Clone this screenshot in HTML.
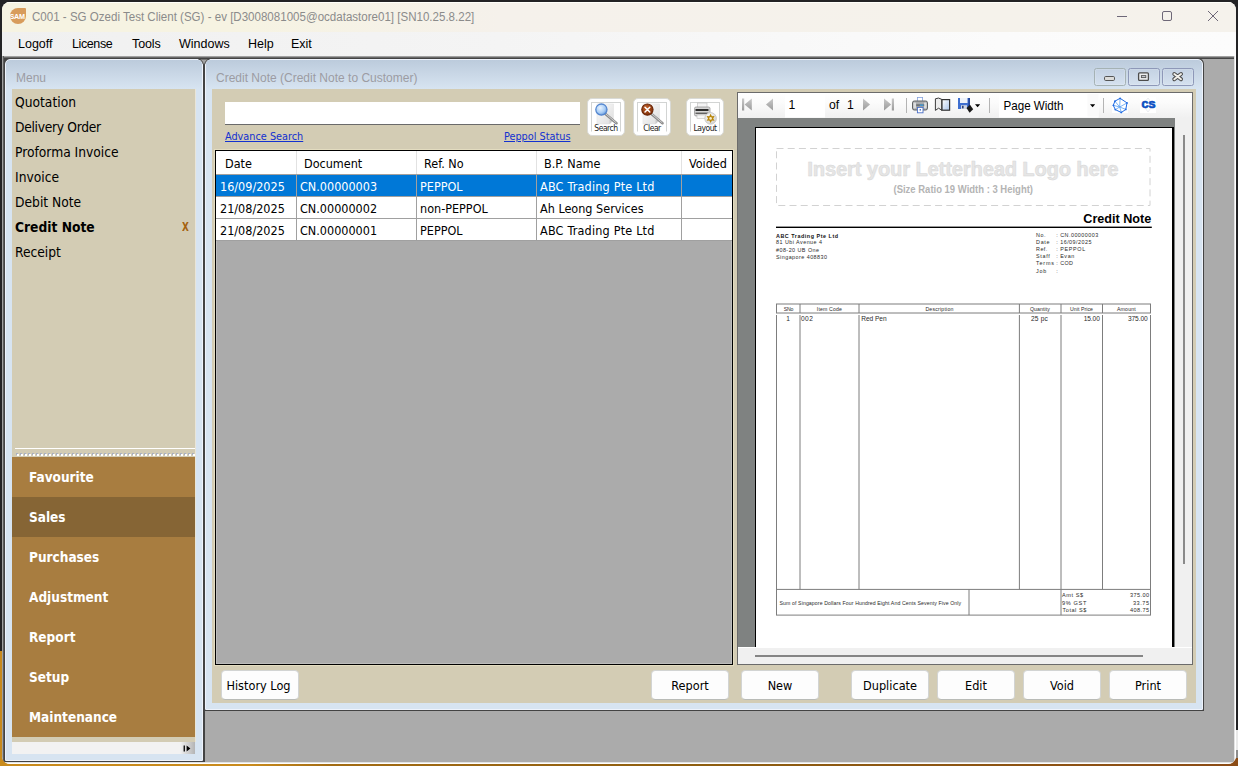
<!DOCTYPE html>
<html lang="en">
<head>
<meta charset="utf-8">
<title>C001 - SG Ozedi Test Client (SG)</title>
<style>
*{box-sizing:border-box;margin:0;padding:0}
html,body{width:1238px;height:766px;overflow:hidden}
body{position:relative;background:#232325;font-family:"Liberation Sans","DejaVu Sans",sans-serif;font-size:12px;color:#000}
.abs,div,span,svg,i{position:absolute}
.t{white-space:nowrap;line-height:1}
.tah{font-family:"DejaVu Sans Condensed","DejaVu Sans","Liberation Sans",sans-serif}
/* desktop behind window */
#deskL{left:0;top:651px;width:8px;height:115px;background:#c88a1e}
#deskB{left:0;top:754px;width:1238px;height:12px;background:linear-gradient(90deg,#c98b1d 0,#c98b1d 250px,#a36c14 330px,#8e5e10 700px,#8c4c16 1238px)}
#deskR1{left:1228px;top:730px;width:10px;height:20px;background:#e9e9e9}
#deskR2{left:1228px;top:750px;width:10px;height:8px;background:#8d8d8d}
/* main window */
#win{left:0;top:0;width:1238px;height:766px;clip-path:inset(2px 2px 2px 2px round 8px);background:#fff}
#titlebar{left:0;top:0;width:1238px;height:32px;background:linear-gradient(90deg,#f6f3e2 0,#f6f3e2 230px,#f5f1eb 500px,#f5f2eb 1000px,#f5f2ec 1238px)}
#menubar{left:0;top:32px;width:1238px;height:24px;background:linear-gradient(90deg,#f0f0f0 0,#f1f1f1 120px,#f4f4f4 500px,#fbfbfb 1000px,#fcfcfc 1238px)}
#mdi{left:2px;top:56px;width:1232px;height:706px;background:linear-gradient(180deg,#a0a0a0 0,#a0a0a0 1px,#696969 1px,#696969 2px,#444 2px,#444 3px,#ababab 3px)}
#mdiedge{left:1234px;top:56px;width:2px;height:708px;background:linear-gradient(90deg,#e3e3e3 0,#e3e3e3 1px,#fff 1px)}
#mdiedgeb{left:2px;top:762px;width:1234px;height:2px;background:linear-gradient(180deg,#e3e3e3 0,#e3e3e3 1px,#fff 1px)}

.mi{top:38px;font-size:12.5px;color:#000}

.li{left:15px;font-size:13.7px;color:#000}
.nb{left:29px;font-size:13.5px;font-weight:bold;color:#fff}

.cb{top:68px;width:32px;height:18px;border:1px solid #8e98b8;border-radius:2.5px;background:linear-gradient(180deg,#c4d2e3 0,#d5e1ef 100%);box-shadow:inset 0 0 0 1px rgba(255,255,255,.15)}
.lk{top:131.5px;font-size:10.8px;color:#1231d0;text-decoration:underline;text-decoration-thickness:1px;text-underline-offset:0.8px}
.ib{top:98px;width:38px;height:38px;background:#fff;border-radius:5px;border:1px solid #d9dad6}
.ib i{left:3px;top:3px;width:30px;height:30px;border:1px solid #d2d4d3;border-bottom-color:#fff}
.ib span{left:0;width:36px;text-align:center;top:25px;font-size:8.5px;letter-spacing:-0.5px;color:#222}
.hl{left:216px;width:516px;height:1px;background:#a0a0a0}
.vl{top:175px;width:1px;height:66px;background:#a0a0a0}
.vh{top:151px;width:1px;height:23px;background:#e2e2e2}
.gh{top:158px;font-size:12.5px}
.gc{font-size:12.5px}
.r1{top:181px;color:#fff}.r2{top:203px}.r3{top:225px}
.bt{top:670px;width:78px;height:30px;background:#fdfdfd;border-radius:4.5px;border:1px solid #d2d4d3;border-bottom-color:#b9bbb7;font-size:12.6px;line-height:29px;text-align:center;white-space:nowrap}
</style>
</head>
<body>
<div id="deskL"></div>
<div id="deskB"></div>
<div id="deskR1"></div>
<div id="deskR2"></div>
<div id="win">
 <div id="titlebar"></div>
 <div id="menubar"></div>
 <div style="left:0;top:2px;width:1238px;height:1px;background:#fffffa"></div>
 <div id="mdi"></div>
 <div id="mdiedge"></div>
 <div id="mdiedgeb"></div>
 
 <!-- left menu panel -->
 <div id="lp" style="left:2px;top:56px;width:203px;height:706px;background:linear-gradient(180deg,#a0a0a0 0,#a0a0a0 1px,#696969 1px,#696969 2px,#434343 2px);border-left:1px solid #a0a0a0;box-shadow:inset 1px 0 0 #5c5c5c"></div>
 <div id="lpi" style="left:5px;top:59px;width:198px;height:702px;background:linear-gradient(180deg,#bccbdc 0,#d7e4f1 29px,#d7e4f1 100%);border:1px solid #eef3fc;border-radius:5px 5px 0 0"></div>
 <span class="t" style="left:16px;top:72px;font-size:12px;color:#9c9ca3">Menu</span>
 <div id="lpb" style="left:12px;top:89px;width:184px;height:653px;background:#d3ccb4;border-right:1px solid #e9e5d8"></div>
 <span class="t tah li" style="top:96px">Quotation</span>
 <span class="t tah li" style="top:121px;letter-spacing:-0.3px">Delivery Order</span>
 <span class="t tah li" style="top:146px">Proforma Invoice</span>
 <span class="t tah li" style="top:171px">Invoice</span>
 <span class="t tah li" style="top:196px">Debit Note</span>
 <span class="t tah li" style="top:221px;font-weight:bold">Credit Note</span>
 <span class="t tah" style="left:182px;top:221px;font-size:12.3px;font-weight:bold;color:#a4610e;transform:scaleX(.8);transform-origin:0 0">X</span>
 <span class="t tah li" style="top:246px">Receipt</span>
 <div style="left:15px;top:448px;width:180px;height:1px;background:#fff"></div>
 <div style="left:16px;top:453px;width:178px;height:2px;background:repeating-linear-gradient(90deg,#a9b0c0 0,#a9b0c0 2px,transparent 2px,transparent 4px)"></div><div style="left:17px;top:454px;width:178px;height:2px;background:repeating-linear-gradient(90deg,#fff 0,#fff 2px,transparent 2px,transparent 4px)"></div>
 <div id="nav" style="left:12px;top:457px;width:183px;height:280px;background:#a87d40"></div>
 <div style="left:12px;top:497px;width:183px;height:40px;background:#866535"></div>
 <span class="t tah nb" style="top:471px">Favourite</span>
 <span class="t tah nb" style="top:511px">Sales</span>
 <span class="t tah nb" style="top:551px">Purchases</span>
 <span class="t tah nb" style="top:591px">Adjustment</span>
 <span class="t tah nb" style="top:631px">Report</span>
 <span class="t tah nb" style="top:671px">Setup</span>
 <span class="t tah nb" style="top:711px">Maintenance</span>
 <div style="left:12px;top:742px;width:183px;height:12px;background:#f2f2f2"></div>
 <div style="left:180px;top:742px;width:15px;height:12px;background:linear-gradient(90deg,#f2f2f2,#b4b4b4)"></div>
 <svg style="left:183px;top:745px" width="9" height="7" viewBox="0 0 9 7"><rect x="0.6" y="0.5" width="1.3" height="6" fill="#000"/><path d="M3.6 0.5 L7.4 3.5 L3.6 6.5Z" fill="#000"/></svg>
 <!--LEFTPANEL-->
 
 <!-- credit note window frame -->
 <div id="cw" style="left:204px;top:58px;width:1000px;height:653px;background:#434343;border-radius:0 6px 0 0"></div>
 <div id="cwi" style="left:205px;top:59px;width:998px;height:651px;background:linear-gradient(180deg,#bccbdc 0,#d7e4f1 29px,#d7e4f1 100%);border:1px solid #eef3fc;border-radius:5px 5px 0 0"></div>
 <span class="t" style="left:216px;top:72px;font-size:12px;color:#9c9ca3">Credit Note (Credit Note to Customer)</span>
 <!-- mdi child buttons -->
 <div class="cb" style="left:1094px;border-color:#a5b2b4"></div>
 <div class="cb" style="left:1128px"></div>
 <div class="cb" style="left:1162px"></div>
 <svg style="left:1094px;top:68px" width="100" height="18" viewBox="0 0 100 18">
  <rect x="10.5" y="8.5" width="10" height="4" rx="1.2" fill="#dcdcda" stroke="#555" stroke-width="1"/>
  <rect x="44.6" y="4.8" width="9.8" height="7.6" rx="1" fill="#eceef0" stroke="#4c4c4c" stroke-width="1.3"/>
  <rect x="47.4" y="7.6" width="4.4" height="2" fill="#c9ced6" stroke="#555" stroke-width="0.9"/>
  <path d="M80.3 6 L87 11.2 M87 6 L80.3 11.2" stroke="#4c4c4c" stroke-width="4" stroke-linecap="round"/>
  <path d="M80.3 6 L87 11.2 M87 6 L80.3 11.2" stroke="#f1f0ea" stroke-width="2" stroke-linecap="round"/>
 </svg>
 <div id="cbody" style="left:212px;top:89px;width:984px;height:614px;background:#d3ccb4"></div>
 <!-- search row -->
 <div style="left:225px;top:102px;width:355px;height:23px;background:#fff;border-bottom:1px solid #6a6a6a"></div>
 <span class="t tah lk" style="left:225px">Advance Search</span>
 <span class="t tah lk" style="left:504px">Peppol Status</span>
 <div class="ib" style="left:587px"><i></i><span class="t tah">Search</span></div>
 <div class="ib" style="left:633px"><i></i><span class="t tah">Clear</span></div>
 <div class="ib" style="left:686px"><i></i><span class="t tah">Layout</span></div>
 
 <svg style="left:588px;top:99px" width="136" height="36" viewBox="588 99 136 36">
  <defs>
   <linearGradient id="pap" x1="0" y1="0" x2="1" y2="1"><stop offset="0" stop-color="#fdfdfd"/><stop offset="1" stop-color="#dcdcdc"/></linearGradient>
   <radialGradient id="lensb" cx="0.4" cy="0.35" r="0.7"><stop offset="0" stop-color="#eaf4ff"/><stop offset="0.6" stop-color="#a9cdf5"/><stop offset="1" stop-color="#5e92d8"/></radialGradient>
   <radialGradient id="lensr" cx="0.4" cy="0.35" r="0.7"><stop offset="0" stop-color="#c4622a"/><stop offset="1" stop-color="#7a2c06"/></radialGradient>
   <radialGradient id="gear" cx="0.4" cy="0.35" r="0.7"><stop offset="0" stop-color="#ffffff"/><stop offset="1" stop-color="#cfcfcf"/></radialGradient>
  </defs>
  <!-- search -->
  <path d="M597 104 L613.5 104 L613.5 120 L609.5 124 L597 124Z" fill="url(#pap)" stroke="#e3e3e3" stroke-width="0.6"/>
  <path d="M613.5 120 L609.5 120 L609.5 124Z" fill="#c9c9c9"/>
  <path d="M605.5 114 L616.5 123.2" stroke="#8a8a8a" stroke-width="2.6" stroke-linecap="round"/>
  <path d="M605.5 113.6 L616 122.6" stroke="#d9d9d9" stroke-width="0.9" stroke-linecap="round"/>
  <circle cx="601.4" cy="109.6" r="5.6" fill="url(#lensb)" stroke="#5486cf" stroke-width="1.3"/>
  <!-- clear -->
  <path d="M643 104 L659.5 104 L659.5 120 L655.5 124 L643 124Z" fill="url(#pap)" stroke="#e3e3e3" stroke-width="0.6"/>
  <path d="M659.5 120 L655.5 120 L655.5 124Z" fill="#c9c9c9"/>
  <path d="M651.5 114 L662.5 123.2" stroke="#8a8a8a" stroke-width="2.6" stroke-linecap="round"/>
  <path d="M651.5 113.6 L662 122.6" stroke="#d9d9d9" stroke-width="0.9" stroke-linecap="round"/>
  <circle cx="647.4" cy="109.6" r="5.6" fill="url(#lensr)" stroke="#6b2606" stroke-width="1.2"/>
  <path d="M645 107.2 L649.8 112 M649.8 107.2 L645 112" stroke="#fff" stroke-width="1.5" stroke-linecap="round"/>
  <!-- layout -->
  <rect x="697.5" y="103" width="9.5" height="5" fill="#f4f4f4" stroke="#bdbdbd" stroke-width="0.6"/>
  <rect x="694.5" y="107" width="15.5" height="9" rx="1.5" fill="#d6d6d6" stroke="#8c8c8c" stroke-width="0.7"/>
  <rect x="695.5" y="109" width="13" height="2" fill="#2b2b2b"/>
  <rect x="695.5" y="112.6" width="13" height="1.3" fill="#555"/>
  <rect x="697" y="115" width="10" height="3.5" fill="#f7f7f7" stroke="#b5b5b5" stroke-width="0.5"/>
  <circle cx="710.6" cy="118.4" r="5.8" fill="url(#gear)" stroke="#c4c4c4" stroke-width="0.8"/>
  <path d="M710.6 113.8 L711.9 116.2 L714.6 116.1 L713.2 118.4 L714.6 120.7 L711.9 120.6 L710.6 123 L709.3 120.6 L706.6 120.7 L708 118.4 L706.6 116.1 L709.3 116.2Z" fill="#b8860b"/>
  <circle cx="710.6" cy="118.4" r="1.3" fill="#f6ecc8"/>
 </svg>

 <!-- grid -->
 <div id="grid" style="left:214px;top:149px;width:520px;height:517px;background:#e3dcc0"></div><div style="left:215px;top:150px;width:518px;height:515px;background:#ababab;border:1px solid #000;box-shadow:inset 0 0 0 1px #bdbdbd"></div>
 <div style="left:216px;top:151px;width:516px;height:24px;background:#fff;border-bottom:1px solid #a4a09c"></div>
 <div style="left:216px;top:175px;width:516px;height:21px;background:#0078d7"></div>
 <div style="left:216px;top:196px;width:516px;height:45px;background:#fff"></div>
 <div class="hl" style="top:196px"></div><div class="hl" style="top:218px"></div><div class="hl" style="top:240px"></div>
 <div class="vl" style="left:296px"></div><div class="vl" style="left:416px"></div><div class="vl" style="left:536px"></div><div class="vl" style="left:681px"></div>
 <div class="vh" style="left:296px"></div><div class="vh" style="left:416px"></div><div class="vh" style="left:536px"></div><div class="vh" style="left:681px"></div>
 <span class="t tah gh" style="left:225px">Date</span>
 <span class="t tah gh" style="left:304px">Document</span>
 <span class="t tah gh" style="left:424px">Ref. No</span>
 <span class="t tah gh" style="left:544px">B.P. Name</span>
 <span class="t tah gh" style="left:689px">Voided</span>
 <span class="t tah gc r1" style="left:220px">16/09/2025</span><span class="t tah gc r1" style="left:300px">CN.00000003</span><span class="t tah gc r1" style="left:420px">PEPPOL</span><span class="t tah gc r1" style="left:540px;letter-spacing:0.2px">ABC Trading Pte Ltd</span>
 <span class="t tah gc r2" style="left:220px">21/08/2025</span><span class="t tah gc r2" style="left:300px">CN.00000002</span><span class="t tah gc r2" style="left:420px">non-PEPPOL</span><span class="t tah gc r2" style="left:540px">Ah Leong Services</span>
 <span class="t tah gc r3" style="left:220px">21/08/2025</span><span class="t tah gc r3" style="left:300px">CN.00000001</span><span class="t tah gc r3" style="left:420px">PEPPOL</span><span class="t tah gc r3" style="left:540px;letter-spacing:0.2px">ABC Trading Pte Ltd</span>
 <!-- bottom buttons -->
 <div class="bt tah" style="left:221px;padding-right:3px">History Log</div>
 <div class="bt tah" style="left:651px">Report</div>
 <div class="bt tah" style="left:741px">New</div>
 <div class="bt tah" style="left:851px">Duplicate</div>
 <div class="bt tah" style="left:937px">Edit</div>
 <div class="bt tah" style="left:1023px">Void</div>
 <div class="bt tah" style="left:1109px">Print</div>
 
 <!-- report viewer -->
 <div id="rv" style="left:737px;top:92px;width:456px;height:573px;background:#f0f0f0;border:1px solid #6b6b6b"></div>
 <div id="rvtb" style="left:738px;top:93px;width:454px;height:25px;background:linear-gradient(180deg,#ffffff 0,#fbfbfb 40%,#f0f0f0 100%)"></div>
 <div id="rvbg" style="left:738px;top:118px;width:437px;height:529px;background:#7f8281"></div>
 <div id="page" style="left:755px;top:127px;width:419px;height:520px;background:#fff;border-left:1px solid #000;border-top:1px solid #000;border-right:2px solid #000"></div>
 <div style="left:738px;top:647px;width:454px;height:1px;background:#fff"></div>
 <div style="left:1183px;top:135px;width:2px;height:429px;background:#8a8a8a"></div>
 <div style="left:755px;top:655px;width:388px;height:2px;background:#858585"></div>
 <!-- toolbar -->
 <svg id="tbsvg" style="left:738px;top:93px" width="454" height="25" viewBox="738 93 454 25" font-family="'Liberation Sans',sans-serif">
  <defs>
   <linearGradient id="gg" x1="0" y1="0" x2="0" y2="1"><stop offset="0" stop-color="#c9c9c9"/><stop offset="1" stop-color="#9b9b9b"/></linearGradient>
   <linearGradient id="pg" x1="0" y1="0" x2="1" y2="1"><stop offset="0" stop-color="#ffffff"/><stop offset="1" stop-color="#a9c4ea"/></linearGradient>
  </defs>
  <g fill="url(#gg)">
   <rect x="742" y="98.5" width="2.2" height="12"/><path d="M751.8 98.5 L751.8 110.5 L744.6 104.5Z"/>
   <path d="M773 98.5 L773 110.5 L766 104.5Z"/>
   <path d="M863 98.5 L863 110.5 L870 104.5Z"/>
   <path d="M884 98.5 L884 110.5 L891.2 104.5Z"/><rect x="891.8" y="98.5" width="2.2" height="12"/>
  </g>
  <rect x="785" y="93" width="40" height="24.5" fill="#fff"/>
  <text x="788.5" y="108.6" font-size="12.2" fill="#000">1</text>
  <text x="829" y="108.6" font-size="12.2" fill="#000">of</text>
  <text x="847" y="108.6" font-size="12.2" fill="#000">1</text>
  <rect x="906" y="98" width="1" height="15" fill="#b4b4b4"/>
  <rect x="989" y="98" width="1" height="15" fill="#b4b4b4"/>
  <rect x="1103" y="98" width="1" height="15" fill="#b4b4b4"/>
  <!-- printer -->
  <g>
   <rect x="917.4" y="97.4" width="5.2" height="4.2" fill="#fff" stroke="#86a2dc" stroke-width="0.8"/>
   <rect x="912.5" y="101" width="15" height="9" rx="1.8" fill="#a9abad" stroke="#5f6163" stroke-width="1"/>
   <rect x="913.4" y="102.6" width="2.6" height="5.8" rx="0.8" fill="#dcdddd"/>
   <rect x="924" y="102.6" width="2.6" height="5.8" rx="0.8" fill="#dcdddd"/>
   <rect x="916.2" y="104.2" width="8" height="2" fill="#6f7276"/>
   <rect x="919.8" y="104.5" width="3.6" height="1.2" fill="#3aa6ee"/>
   <rect x="917.4" y="107.4" width="5.6" height="5.4" fill="#fff" stroke="#4a6fc8" stroke-width="0.9"/>
   <rect x="919.6" y="109.2" width="1.4" height="1.3" fill="#2c58c0"/>
  </g>
  <!-- book -->
  <g>
   <path d="M935.4 98.8 Q938.5 97 941.8 99.4 L941.8 110.3 L938.6 108.2 L935.4 110.4Z" fill="#ececec" stroke="#3b3b3b" stroke-width="1"/>
   <rect x="942" y="99.6" width="7.6" height="10.6" fill="url(#pg)" stroke="#333" stroke-width="1.2"/>
  </g>
  <!-- save -->
  <g>
   <rect x="958" y="98" width="12" height="11" fill="#3e6fd0"/>
   <rect x="960" y="98" width="7.5" height="5" fill="#eef3fb"/>
   <rect x="961" y="105.2" width="6" height="3.8" fill="#cfd6e4"/>
   <rect x="962" y="105.8" width="1.6" height="2.6" fill="#2a3f78"/>
   <rect x="968.3" y="98" width="1.7" height="9" fill="#24479c"/>
   <path d="M966.5 108 L970 104.8 L973.2 109.2 L969.6 112.8Z" fill="#1a1a1a"/>
   <path d="M975 104.2 L980.2 104.2 L977.6 107.2Z" fill="#000"/>
  </g>
  <!-- combo -->
  <rect x="999" y="93" width="99.5" height="24.5" fill="#fff"/>
  <rect x="1087.5" y="94" width="11" height="22.5" fill="#fafafa"/>
  <text x="1003.5" y="109.9" font-size="12.2" fill="#000" textLength="60" lengthAdjust="spacingAndGlyphs">Page Width</text>
  <path d="M1090 104.2 L1095.2 104.2 L1092.6 107.2Z" fill="#000"/>
  <!-- poly icon -->
  <rect x="1112" y="97" width="16" height="16" fill="#fff"/>
  <g fill="none" stroke="#1f6ae2" stroke-width="1" stroke-linejoin="round">
   <path d="M1120.1 98.3 L1127 102.9 L1125.8 109.4 L1121.3 112.5 L1115.3 109.6 L1113.3 105.3 L1114.9 101.2Z"/>
   <path d="M1120.1 98.3 L1119.7 107 L1127 102.9 M1119.7 107 L1113.3 105.3 M1119.7 107 L1121.3 112.5 M1114.9 101.2 L1119.7 107 L1125.8 109.4 M1115.3 109.6 L1119.7 107" stroke="#57a0f4" stroke-width="0.8"/>
  </g>
  <g fill="#1f6ae2"><circle cx="1120.1" cy="98.4" r="0.9"/><circle cx="1127" cy="102.9" r="0.9"/><circle cx="1125.8" cy="109.4" r="0.9"/><circle cx="1121.3" cy="112.4" r="0.9"/><circle cx="1115.3" cy="109.6" r="0.9"/><circle cx="1113.4" cy="105.3" r="0.9"/><circle cx="1114.9" cy="101.2" r="0.9"/></g>
  <!-- CS icon -->
  <rect x="1140" y="97" width="16" height="16" fill="#fff"/>
  <path d="M1148 98 L1153 105 L1148 112 L1143 105Z" fill="none" stroke="#e6e9ee" stroke-width="0.8"/>
  <text x="1141.4" y="108.2" font-size="10.4" font-weight="bold" fill="#0b4ec2" stroke="#0b4ec2" stroke-width="0.6" textLength="14" lengthAdjust="spacingAndGlyphs" font-family="'Liberation Mono','DejaVu Sans Mono',monospace">CS</text>
 </svg>
  <svg id="pagesvg" style="left:756px;top:128px" width="416" height="519" viewBox="756 128 416 519" font-family="'Liberation Sans',sans-serif">
  <rect x="776.5" y="148.5" width="373.5" height="57" fill="none" stroke="#d2d2d2" stroke-width="1" stroke-dasharray="7 4.2"/>
  <text x="808.1" y="176.3" font-size="21" font-weight="bold" fill="#f1f1f1" textLength="311" lengthAdjust="spacingAndGlyphs">Insert your Letterhead Logo here</text>
  <text x="807.3" y="175.6" font-size="21" font-weight="bold" fill="#e6e6e6" stroke="#d6d6d6" stroke-width="0.45" textLength="311" lengthAdjust="spacingAndGlyphs">Insert your Letterhead Logo here</text>
  <text x="893.5" y="193.3" font-size="10.4" font-weight="bold" fill="#b4b4b4" textLength="139.5" lengthAdjust="spacingAndGlyphs">(Size Ratio 19 Width : 3 Height)</text>
  <text x="1151.3" y="222.9" font-size="13" font-weight="bold" fill="#000" text-anchor="end" textLength="68" lengthAdjust="spacingAndGlyphs">Credit Note</text>
  <rect x="776" y="226.6" width="375.8" height="1.4" fill="#000"/>
  <text x="776" y="237.9" font-size="5.4" font-weight="bold" textLength="62" lengthAdjust="spacing" fill="#111">ABC Trading Pte Ltd</text>
  <text x="776" y="243.9" font-size="5.4" textLength="46" lengthAdjust="spacing" fill="#2a2a2a">81 Ubi Avenue 4</text>
  <text x="776" y="251.8" font-size="5.4" textLength="43" lengthAdjust="spacing" fill="#2a2a2a">#08-20 UB One</text>
  <text x="776" y="258.8" font-size="5.4" textLength="51" lengthAdjust="spacing" fill="#2a2a2a">Singapore 408830</text>
  <text x="1036.1" y="236.8" font-size="5.4" textLength="9.4" lengthAdjust="spacing" fill="#2a2a2a">No.</text>
  <text x="1056.2" y="236.8" font-size="5.4" fill="#2a2a2a">:</text>
  <text x="1060.2" y="236.8" font-size="5.4" textLength="38" lengthAdjust="spacing" fill="#2a2a2a">CN.00000003</text>
  <text x="1036.1" y="243.9" font-size="5.4" textLength="13.3" lengthAdjust="spacing" fill="#2a2a2a">Date</text>
  <text x="1056.2" y="243.9" font-size="5.4" fill="#2a2a2a">:</text>
  <text x="1060.2" y="243.9" font-size="5.4" textLength="31.2" lengthAdjust="spacing" fill="#2a2a2a">16/09/2025</text>
  <text x="1036.1" y="250.9" font-size="5.4" textLength="11.2" lengthAdjust="spacing" fill="#2a2a2a">Ref.</text>
  <text x="1056.2" y="250.9" font-size="5.4" fill="#2a2a2a">:</text>
  <text x="1060.2" y="250.9" font-size="5.4" textLength="25" lengthAdjust="spacing" fill="#2a2a2a">PEPPOL</text>
  <text x="1036.1" y="257.8" font-size="5.4" textLength="13.6" lengthAdjust="spacing" fill="#2a2a2a">Staff</text>
  <text x="1056.2" y="257.8" font-size="5.4" fill="#2a2a2a">:</text>
  <text x="1060.2" y="257.8" font-size="5.4" textLength="14" lengthAdjust="spacing" fill="#2a2a2a">Evan</text>
  <text x="1036.1" y="264.9" font-size="5.4" textLength="17.8" lengthAdjust="spacing" fill="#2a2a2a">Terms</text>
  <text x="1056.2" y="264.9" font-size="5.4" fill="#2a2a2a">:</text>
  <text x="1060.2" y="264.9" font-size="5.4" textLength="12.8" lengthAdjust="spacing" fill="#2a2a2a">COD</text>
  <text x="1036.1" y="272.7" font-size="5.4" textLength="10.2" lengthAdjust="spacing" fill="#2a2a2a">Job</text>
  <text x="1056.2" y="272.7" font-size="5.4" fill="#2a2a2a">:</text>
  <g fill="none" stroke="#7d7d7d" stroke-width="1">
   <rect x="776.5" y="304" width="374" height="9"/>
   <line x1="800" y1="304" x2="800" y2="313"/>
   <line x1="859" y1="304" x2="859" y2="313"/>
   <line x1="1019.4" y1="304" x2="1019.4" y2="313"/>
   <line x1="1061" y1="304" x2="1061" y2="313"/>
   <line x1="1102.5" y1="304" x2="1102.5" y2="313"/>
   <line x1="776.5" y1="315" x2="776.5" y2="589.4"/>
   <line x1="800" y1="315" x2="800" y2="589.4"/>
   <line x1="859" y1="315" x2="859" y2="589.4"/>
   <line x1="1019.4" y1="315" x2="1019.4" y2="589.4"/>
   <line x1="1061" y1="315" x2="1061" y2="589.4"/>
   <line x1="1102.5" y1="315" x2="1102.5" y2="589.4"/>
   <line x1="1150.5" y1="315" x2="1150.5" y2="589.4"/>
   <rect x="776.5" y="589.4" width="374" height="25.7"/>
   <line x1="969" y1="589.4" x2="969" y2="615.1"/><line x1="1061" y1="589.4" x2="1061" y2="615.1"/>
  </g>
  <text x="783.7" y="311.2" font-size="5.2" textLength="9.7" lengthAdjust="spacing" fill="#2a2a2a">SNo</text>
  <text x="816.8" y="311.2" font-size="5.2" textLength="25" lengthAdjust="spacing" fill="#2a2a2a">Item Code</text>
  <text x="925.4" y="311.2" font-size="5.2" textLength="28" lengthAdjust="spacing" fill="#2a2a2a">Description</text>
  <text x="1030" y="311.2" font-size="5.2" textLength="19.8" lengthAdjust="spacing" fill="#2a2a2a">Quantity</text>
  <text x="1070" y="311.2" font-size="5.2" textLength="23" lengthAdjust="spacing" fill="#2a2a2a">Unit Price</text>
  <text x="1117" y="311.2" font-size="5.2" textLength="18.7" lengthAdjust="spacing" fill="#2a2a2a">Amount</text>
  <text x="786.2" y="320.8" font-size="6.6" fill="#2a2a2a">1</text>
  <text x="801" y="320.8" font-size="6.6" textLength="11.8" lengthAdjust="spacing" fill="#2a2a2a">002</text>
  <text x="861.3" y="320.8" font-size="6.6" textLength="25.3" lengthAdjust="spacing" fill="#2a2a2a">Red Pen</text>
  <text x="1031" y="320.8" font-size="6.6" textLength="16.8" lengthAdjust="spacing" fill="#2a2a2a">25 pc</text>
  <text x="1083.7" y="320.8" font-size="6.6" textLength="16.1" lengthAdjust="spacing" fill="#2a2a2a">15.00</text>
  <text x="1128" y="320.8" font-size="6.6" textLength="19.6" lengthAdjust="spacing" fill="#2a2a2a">375.00</text>
  <text x="779.5" y="605.2" font-size="5.2" textLength="181.7" lengthAdjust="spacing" fill="#2a2a2a">Sum of Singapore Dollars Four Hundred Eight And Cents Seventy Five Only</text>
  <text x="1062.1" y="597" font-size="5.6" textLength="21" lengthAdjust="spacing" fill="#2a2a2a">Amt S$</text>
  <text x="1062.1" y="604.7" font-size="5.6" textLength="24.2" lengthAdjust="spacing" fill="#2a2a2a">9% GST</text>
  <text x="1062.5" y="611.8" font-size="5.6" textLength="23.8" lengthAdjust="spacing" fill="#2a2a2a">Total S$</text>
  <text x="1130" y="597" font-size="5.6" textLength="19" lengthAdjust="spacing" fill="#2a2a2a">375.00</text>
  <text x="1133" y="604.7" font-size="5.6" textLength="16" lengthAdjust="spacing" fill="#2a2a2a">33.75</text>
  <text x="1130" y="611.8" font-size="5.6" textLength="19" lengthAdjust="spacing" fill="#2a2a2a">408.75</text>
 </svg>


 <!--CNWIN-->
 
 <!-- title bar content -->
 <div id="appicon" style="left:10px;top:8px;width:16px;height:16px;border-radius:8px 1px 8px 8px;background:#d89c5c;overflow:hidden"><span class="t" style="left:-0.5px;top:5px;font-size:7.2px;font-weight:bold;color:#fff;letter-spacing:-0.3px;transform:scaleY(0.9)">SAM</span></div>
 <span class="t" id="title" style="left:32px;top:11px;font-size:12.5px;color:#8b8b8b;transform:scaleX(0.924);transform-origin:0 0">C001 - SG Ozedi Test Client (SG) - ev [D3008081005@ocdatastore01] [SN10.25.8.22]</span>
 <svg id="wctl" style="left:1100px;top:2px" width="136" height="30" viewBox="0 0 136 30">
  <g fill="none" stroke="#6e6878" stroke-width="1">
   <line x1="17" y1="14.5" x2="27" y2="14.5"/>
   <rect x="62.5" y="9.5" width="9" height="9" rx="1.5"/>
   <path d="M108 9 L118 19 M118 9 L108 19"/>
  </g>
 </svg>
 <!-- menu bar -->
 <span class="t mi" style="left:18px">Logoff</span>
 <span class="t mi" style="left:72px;letter-spacing:-0.4px">License</span>
 <span class="t mi" style="left:132px;letter-spacing:-0.1px">Tools</span>
 <span class="t mi" style="left:179px">Windows</span>
 <span class="t mi" style="left:248px">Help</span>
 <span class="t mi" style="left:291px">Exit</span>
 <svg style="left:196px;top:58px" width="16" height="8" viewBox="0 0 16 8"><path d="M2.5 1 L13.5 1 Q10 1.6 8.6 6.5 L7.4 6.5 Q6 1.6 2.5 1Z" fill="#a4a4a4" stroke="#434343" stroke-width="1"/></svg>
 <!--CHROME-->
</div>
</body>
</html>
